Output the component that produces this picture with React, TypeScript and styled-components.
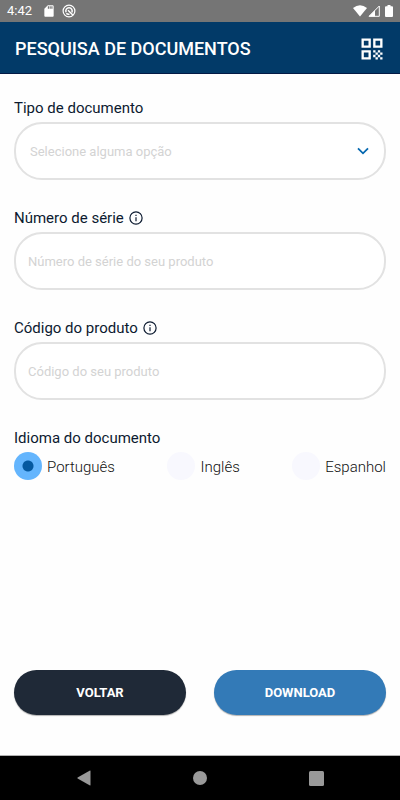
import React, { useState } from "react";
import styled, { createGlobalStyle } from "styled-components";
import { MdQrCode, MdSdCard } from "react-icons/md";

const GlobalStyle = createGlobalStyle`
  * { box-sizing: border-box; }
  body { margin: 0; background: #fefefe; }
  body, button, input, select { font-family: Roboto, "Liberation Sans", sans-serif; }
`;

const Page = styled.div`
  display: flex;
  flex-direction: column;
  min-height: 100vh;
  background: #fefefe;
`;

const StatusBar = styled.div`
  display: flex;
  align-items: center;
  justify-content: space-between;
  height: 22px;
  padding: 0 7px;
  background: #757575;
  color: #fff;
  font-size: 13px;
`;

const StatusGroup = styled.div<{ $gap: number }>`
  display: flex;
  align-items: center;
  gap: ${(p) => p.$gap}px;
`;

const Clock = styled.span`
  line-height: 22px;
  margin-right: 4px;
`;

const Header = styled.header`
  display: flex;
  align-items: center;
  justify-content: space-between;
  height: 52px;
  padding: 2px 14px 0 15px;
  background: #023a68;
  border-bottom: 1px solid #031a45;
  color: #fff;
`;

const Title = styled.h1`
  margin: 0;
  font-size: 18px;
  font-weight: 500;
  line-height: 24px;
`;

const IconButton = styled.button`
  display: flex;
  padding: 0;
  border: 0;
  background: none;
  color: #fff;
  cursor: pointer;
`;

const Form = styled.form`
  display: flex;
  flex: 1;
  flex-direction: column;
  gap: 28px;
  padding: 24px 14px 40px;
`;

const Field = styled.div`
  display: flex;
  flex-direction: column;
  gap: 4px;
`;

const LabelRow = styled.div`
  display: flex;
  align-items: center;
  gap: 5px;
  height: 20px;
  color: #0c1a30;
`;

const Label = styled.label`
  font-size: 15px;
  line-height: 20px;
`;

const InfoButton = styled(IconButton)`
  color: #0c1a30;
`;

const TextInput = styled.input`
  width: 100%;
  height: 58px;
  padding: 0 12px;
  border: 2px solid #e2e2e2;
  border-radius: 28px;
  background: #fff;
  color: #0c1a30;
  font-size: 13px;
  outline-color: #64b5fd;
  &::placeholder { color: #d3d3d3; opacity: 1; }
`;

const SelectBox = styled.div`
  display: grid;
  align-items: center;
  > * { grid-area: 1 / 1; }
  > svg {
    justify-self: end;
    margin-right: 17px;
    pointer-events: none;
  }
`;

const Select = styled.select`
  width: 100%;
  height: 58px;
  padding: 0 40px 0 14px;
  border: 2px solid #e2e2e2;
  border-radius: 28px;
  background: #fff;
  color: #d3d3d3;
  font-size: 13px;
  appearance: none;
  outline-color: #64b5fd;
`;

const RadioField = styled.fieldset`
  min-width: 0;
  margin: 0;
  padding: 0;
  border: 0;
`;

const Legend = styled.legend`
  margin-bottom: 4px;
  padding: 0;
  color: #0c1a30;
  font-size: 15px;
  line-height: 20px;
`;

const RadioRow = styled.div`
  display: flex;
  justify-content: space-between;
`;

const RadioLabel = styled.label`
  display: flex;
  align-items: center;
  gap: 5px;
  color: #111;
  font-size: 15px;
  font-weight: 300;
  line-height: 30px;
  cursor: pointer;
`;

const Radio = styled.input`
  width: 28px;
  height: 28px;
  margin: 0;
  align-self: flex-start;
  border-radius: 50%;
  background: #f8f8fe;
  appearance: none;
  cursor: pointer;
  &:checked {
    background: radial-gradient(circle, #0559a0 0 5px, #64b5fd 6px);
  }
`;

const Actions = styled.div`
  display: grid;
  grid-template-columns: 1fr 1fr;
  gap: 28px;
  margin-top: auto;
`;

const ActionButton = styled.button<{ $color: string }>`
  height: 45px;
  padding: 0;
  border: 0;
  border-radius: 23px;
  background: ${(p) => p.$color};
  box-shadow: 0 1px 1px rgba(0, 0, 0, 0.3);
  color: #fff;
  font-size: 13px;
  font-weight: 700;
  cursor: pointer;
`;

const NavBar = styled.nav`
  display: grid;
  grid-template-columns: repeat(3, 116px);
  justify-content: center;
  height: 45px;
  border-top: 1px solid #b0b0b0;
  background: #000;
`;

const NavButton = styled(IconButton)`
  align-items: center;
  justify-content: center;
`;

const AppMark = () => (
  <svg width="14" height="14" viewBox="0 0 14 14" fill="none" stroke="#fff">
    <circle cx="7" cy="7" r="5.9" strokeWidth="1.2" />
    <path d="M4.1 8.3A3.2 3.2 0 1 1 9.8 8.5" strokeWidth="1.5" />
    <path d="M6 6.2 10.8 11M4.3 9.4q1.5 1.3 3.2.7" strokeWidth="1.4" />
  </svg>
);

const Wifi = () => (
  <svg width="14" height="12" viewBox="0 0 14 12" fill="#fff">
    <path d="M0 3Q7-2.6 14 3L7 11.6Z" />
  </svg>
);

const Signal = () => (
  <svg width="12" height="12" viewBox="0 0 12 12">
    <path d="M11.3 1v10.3H1Z" fill="none" stroke="#fff" strokeWidth="1" />
    <path d="M7 5.2V11.5H1Z" fill="#fff" />
  </svg>
);

const Battery = () => (
  <svg width="8" height="12" viewBox="0 0 8 12" fill="#fff">
    <path d="M2.5 0h3v1.2H7q1 0 1 1V11q0 1-1 1H1q-1 0-1-1V2.2q0-1 1-1h1.5Z" />
  </svg>
);

const Info = () => (
  <svg width="14" height="14" viewBox="0 0 14 14" fill="none" stroke="currentColor" strokeWidth="1.2">
    <circle cx="7" cy="7" r="6.1" />
    <path d="M7 6.2v4.1M7 3.8V5" />
  </svg>
);

const Chevron = () => (
  <svg width="12" height="8" viewBox="0 0 12 8" fill="none" stroke="#0568b0" strokeWidth="1.8">
    <path d="m1 1.3 5 5 5-5" />
  </svg>
);

const languages = ["Português", "Inglês", "Espanhol"];

const textFields = [
  { id: "serial", label: "Número de série", hint: "Número de série do seu produto" },
  { id: "code", label: "Código do produto", hint: "Código do seu produto" },
];

export default function App() {
  const [language, setLanguage] = useState(languages[0]);
  return (
    <Page>
      <GlobalStyle />
      <StatusBar>
        <StatusGroup $gap={6}>
          <Clock>4:42</Clock>
          <MdSdCard size={14} />
          <AppMark />
        </StatusGroup>
        <StatusGroup $gap={5}>
          <StatusGroup $gap={1}>
            <Wifi />
            <Signal />
          </StatusGroup>
          <Battery />
        </StatusGroup>
      </StatusBar>
      <Header>
        <Title>PESQUISA DE DOCUMENTOS</Title>
        <IconButton type="button" aria-label="Ler código QR">
          <MdQrCode size={28} />
        </IconButton>
      </Header>
      <Form onSubmit={(e) => e.preventDefault()}>
        <Field>
          <LabelRow>
            <Label htmlFor="type">Tipo de documento</Label>
          </LabelRow>
          <SelectBox>
            <Select id="type" defaultValue="">
              <option value="">Selecione alguma opção</option>
            </Select>
            <Chevron />
          </SelectBox>
        </Field>
        {textFields.map((f) => (
          <Field key={f.id}>
            <LabelRow>
              <Label htmlFor={f.id}>{f.label}</Label>
              <InfoButton type="button" aria-label={`Ajuda: ${f.label}`}>
                <Info />
              </InfoButton>
            </LabelRow>
            <TextInput id={f.id} placeholder={f.hint} />
          </Field>
        ))}
        <RadioField>
          <Legend>Idioma do documento</Legend>
          <RadioRow>
            {languages.map((name) => (
              <RadioLabel key={name}>
                <Radio
                  type="radio"
                  name="language"
                  checked={language === name}
                  onChange={() => setLanguage(name)}
                />
                {name}
              </RadioLabel>
            ))}
          </RadioRow>
        </RadioField>
        <Actions>
          <ActionButton type="button" $color="#1f2937">VOLTAR</ActionButton>
          <ActionButton type="submit" $color="#337ab7">DOWNLOAD</ActionButton>
        </Actions>
      </Form>
      <NavBar>
        <NavButton type="button" aria-label="Voltar">
          <svg width="14" height="16" viewBox="0 0 14 16" fill="#999">
            <path d="M13 .5q.5-.2.5.4v14.2q0 .6-.5.4L.6 8.4q-.6-.4 0-.8Z" />
          </svg>
        </NavButton>
        <NavButton type="button" aria-label="Início">
          <svg width="14" height="14" viewBox="0 0 14 14" fill="#999">
            <circle cx="7" cy="7" r="7" />
          </svg>
        </NavButton>
        <NavButton type="button" aria-label="Recentes">
          <svg width="15" height="15" viewBox="0 0 15 15" fill="#999">
            <rect width="15" height="15" rx="1.5" />
          </svg>
        </NavButton>
      </NavBar>
    </Page>
  );
}
